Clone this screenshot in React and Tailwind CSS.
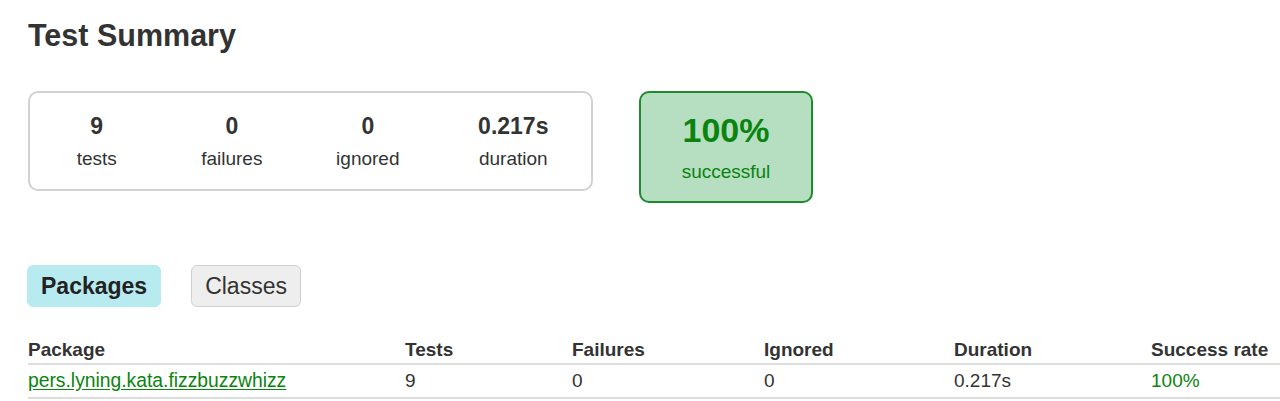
const counters = [
  { value: "9", label: "tests", width: "w-[134px]" },
  { value: "0", label: "failures", width: "w-[137px]" },
  { value: "0", label: "ignored", width: "w-[136px]" },
  { value: "0.217s", label: "duration", width: "w-[156px]" },
];

const columns = [
  { name: "Package", width: "w-[377px]" },
  { name: "Tests", width: "w-[167px]" },
  { name: "Failures", width: "w-[192px]" },
  { name: "Ignored", width: "w-[190px]" },
  { name: "Duration", width: "w-[197px]" },
  { name: "Success rate", width: "" },
];

const App = () => {
  return (
    <div className="min-h-[401px] bg-white pl-[28px] pt-[20px] text-[#333] font-['Liberation_Sans',Arial,sans-serif]">
      <h1 className="text-[30.5px] leading-none font-bold">Test Summary</h1>

      {/* summary + success box */}
      <div className="mt-[40px] flex items-start gap-[46px]">
        <div className="flex w-[565px] rounded-[10px] border-2 border-[#d2d2d2] pt-[22px] pb-[21px]">
          {counters.map((c) => (
            <div key={c.label} className={`${c.width} flex flex-col items-center`}>
              <div className="text-[23px] leading-none font-bold">{c.value}</div>
              <div className="mt-[11px] text-[19px] leading-none">{c.label}</div>
            </div>
          ))}
        </div>

        <div className="flex w-[174px] flex-col items-center rounded-[10px] border-2 border-[#1f8a2e] bg-[#b5dfc0] pt-[20px] pb-[20px] text-[#0a840f]">
          <div className="text-[34px] leading-none font-bold">100%</div>
          <div className="mt-[15px] text-[19px] leading-none">successful</div>
        </div>
      </div>

      {/* tabs */}
      <div className="-ml-[1px] mt-[62px] flex gap-[30px]">
        <div className="rounded-[6px] border border-[#b8ebf0] bg-[#b8ebf0] px-[13px] pt-[9px] pb-[8px] text-[23px] leading-none font-bold text-[#222]">
          Packages
        </div>
        <div className="rounded-[6px] border border-[#d0d0d0] bg-[#eeeeee] px-[13px] pt-[9px] pb-[8px] text-[23px] leading-none text-[#333]">
          Classes
        </div>
      </div>

      {/* packages table */}
      <table className="mt-[33px] w-[1252px] table-fixed border-collapse text-left text-[19px] leading-none">
        <thead>
          <tr className="border-b-2 border-[#dddddd]">
            {columns.map((col) => (
              <th key={col.name} className={`${col.width} p-0 pb-[4px] font-bold`}>
                {col.name}
              </th>
            ))}
          </tr>
        </thead>
        <tbody>
          <tr className="border-b-2 border-[#dddddd]">
            <td className="p-0 pt-[6px] pb-[7px] text-[19.3px]">
              <a href="#" className="text-[#0a840f] underline underline-offset-[2px]">
                pers.lyning.kata.fizzbuzzwhizz
              </a>
            </td>
            <td className="p-0 pt-[6px] pb-[7px]">9</td>
            <td className="p-0 pt-[6px] pb-[7px]">0</td>
            <td className="p-0 pt-[6px] pb-[7px]">0</td>
            <td className="p-0 pt-[6px] pb-[7px]">0.217s</td>
            <td className="p-0 pt-[6px] pb-[7px] text-[#0a840f]">100%</td>
          </tr>
        </tbody>
      </table>
    </div>
  );
};

export default App;
